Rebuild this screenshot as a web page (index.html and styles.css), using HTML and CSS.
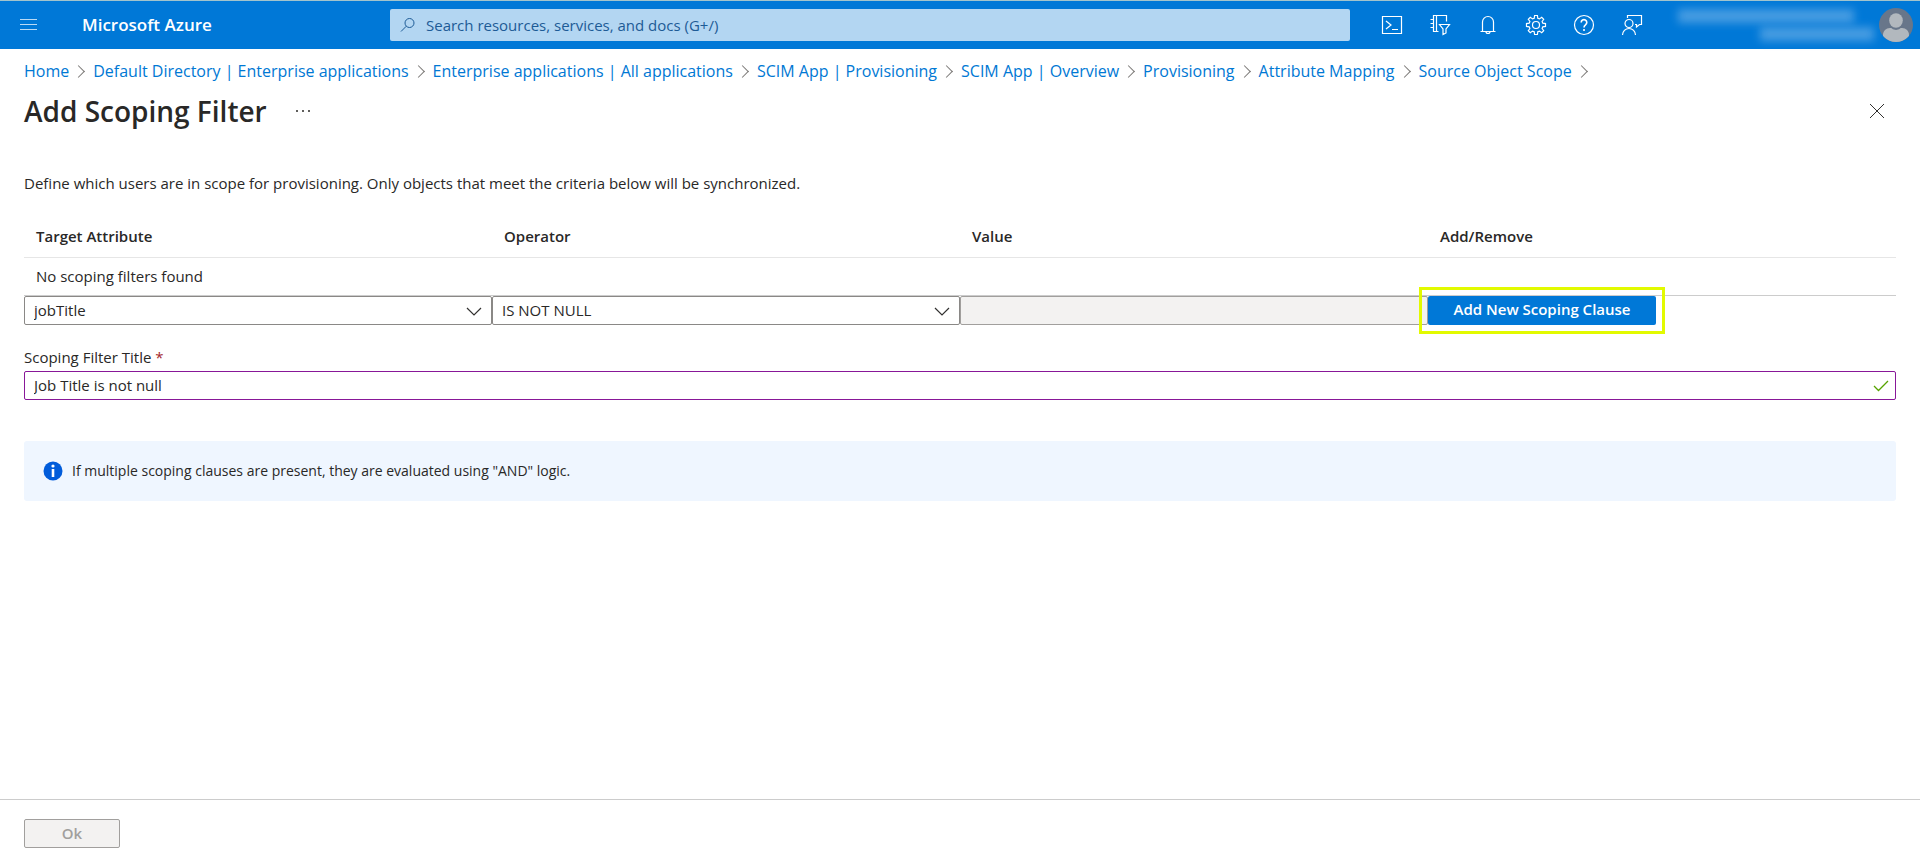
FILE: index.html
```html
<!DOCTYPE html>
<html lang="en">
<head>
<meta charset="utf-8">
<title>Add Scoping Filter - Microsoft Azure</title>
<link rel="stylesheet" href="styles.css">
</head>
<body>
<header class="topbar">
  <div class="brand">
    <button class="icon-btn menu" aria-label="Menu"><svg width="18" height="14" viewBox="0 0 18 14"><path d="M0 1.500h17M0 6.500h17M0 11.500h17" stroke="#b9daf5" fill="none"/></svg></button>
    <a class="brand-name" href="#">Microsoft Azure</a>
  </div>
  <div class="search">
    <svg width="16" height="16" viewBox="0 0 16 16"><circle cx="9.500" cy="6" r="4.500" stroke="#1d5b96" fill="none"/><path d="M6.300 9.200 1 14.500" stroke="#1d5b96" fill="none"/></svg>
    <input class="search-input" type="text" aria-label="Search" placeholder="Search resources, services, and docs (G+/)">
  </div>
  <div class="tools">
    <button class="icon-btn" aria-label="Cloud Shell"><svg width="24" height="24" viewBox="0 0 24 24"><path d="M2.500 3.500h19v17h-19zM6 8l5 4-5 4M12 16.500h6"/></svg></button>
    <button class="icon-btn" aria-label="Directories and subscriptions"><svg width="24" height="24" viewBox="0 0 24 24"><path d="M10.500 18.500H5.500V2.500h13v6M8.500 2.500v16M2.500 6.500h3M2.500 10.500h3M2.500 14.500h3M11.500 11.500h10l-3.500 4.500v4l-3 1.500V16z"/></svg></button>
    <button class="icon-btn" aria-label="Notifications"><svg width="24" height="24" viewBox="0 0 24 24"><path d="M4.500 18.500h15M6.500 18.500V9a5.500 5.500 0 0 1 11 0v9.500M10 18.500a2 2 0 0 0 4 0"/></svg></button>
    <button class="icon-btn" aria-label="Settings"><svg width="24" height="24" viewBox="0 0 24 24"><circle cx="12" cy="12" r="3.500"/><path d="M10.600 2.500h2.800l.4 2.700 1.700.7 2.200-1.600 2 2-1.600 2.200.7 1.700 2.700.4v2.800l-2.700.4-.7 1.700 1.600 2.200-2 2-2.200-1.600-1.700.7-.4 2.700h-2.800l-.4-2.700-1.700-.7-2.200 1.600-2-2 1.600-2.200-.7-1.700-2.700-.4v-2.800l2.700-.4.7-1.700-1.600-2.200 2-2 2.200 1.600 1.700-.7z"/></svg></button>
    <button class="icon-btn" aria-label="Help"><svg width="24" height="24" viewBox="0 0 24 24"><circle cx="12" cy="12" r="9.500"/><path d="M9.200 9.500a2.800 2.800 0 1 1 4.300 2.300c-1 .7-1.500 1.200-1.500 2.700M12 16v2" stroke-width="1.600"/></svg></button>
    <button class="icon-btn" aria-label="Feedback"><svg width="24" height="24" viewBox="0 0 24 24"><circle cx="9" cy="10.500" r="4"/><path d="M2.500 22a6.500 6.500 0 0 1 13 0M7.500 5V2.500h14v9h-2l-3 2.500v-2.500H15"/></svg></button>
  </div>
  <div class="account">
    <div class="account-id"><span class="smudge"></span><span class="smudge smudge-short"></span></div>
    <svg class="avatar" width="34" height="34" viewBox="0 0 34 34"><defs><clipPath id="face"><circle cx="17" cy="17" r="17"/></clipPath></defs><g clip-path="url(#face)"><path fill="#68768a" d="M0 0h34v34H0z"/><path d="M4 34V27c0-4 3-7 7-7h12c4 0 7 3 7 7v7z" fill="#b2b8be"/><ellipse cx="17" cy="13" rx="8" ry="9" fill="#68768a"/><ellipse cx="17" cy="12.500" rx="6.800" ry="7.300" fill="#b2b8be"/></g></svg>
  </div>
</header>
<main class="blade">
  <nav class="crumbs" aria-label="Breadcrumb">
    <a href="#">Home</a><a href="#">Default Directory | Enterprise applications</a><a href="#">Enterprise applications | All applications</a><a href="#">SCIM App | Provisioning</a><a href="#">SCIM App | Overview</a><a href="#">Provisioning</a><a href="#">Attribute Mapping</a><a href="#">Source Object Scope</a>
  </nav>
  <div class="title-row">
    <h1 class="title">Add Scoping Filter</h1>
    <button class="icon-btn more" aria-label="More"><svg width="16" height="4" viewBox="0 0 16 4"><path d="M1 1h2v2H1zM7 1h2v2H7zM13 1h2v2h-2z" fill="#605e5c"/></svg></button>
    <button class="icon-btn close" aria-label="Close"><svg width="16" height="16" viewBox="0 0 16 16"><path d="m1 1 14 14M15 1 1 15" stroke="#323130" fill="none"/></svg></button>
  </div>
  <p class="intro">Define which users are in scope for provisioning. Only objects that meet the criteria below will be synchronized.</p>
  <table class="clauses">
    <thead><tr><th>Target Attribute</th><th>Operator</th><th>Value</th><th>Add/Remove</th></tr></thead>
    <tbody><tr><td colspan="4">No scoping filters found</td></tr></tbody>
  </table>
  <div class="editor">
    <div class="field-wrap">
      <select class="field select" aria-label="Target Attribute"><option>jobTitle</option></select>
      <svg class="chevron" width="16" height="10" viewBox="0 0 16 10"><path d="m1 1 7 7 7-7" stroke="#323130" stroke-width="1.200" fill="none"/></svg>
    </div>
    <div class="field-wrap">
      <select class="field select" aria-label="Operator"><option>IS NOT NULL</option></select>
      <svg class="chevron" width="16" height="10" viewBox="0 0 16 10"><path d="m1 1 7 7 7-7" stroke="#323130" stroke-width="1.200" fill="none"/></svg>
    </div>
    <input class="field" type="text" aria-label="Value" disabled>
    <div class="highlight"><button class="add">Add New Scoping Clause</button></div>
  </div>
  <label class="label" for="filter-title">Scoping Filter Title <span class="required">*</span></label>
  <div class="field-wrap">
    <input class="field valid" id="filter-title" type="text" value="Job Title is not null">
    <svg class="tick" width="16" height="12" viewBox="0 0 16 12"><path d="m1 6 4.500 4.500L15 1" stroke="#57a300" stroke-width="1.300" fill="none"/></svg>
  </div>
  <div class="notice">
    <svg width="20" height="20" viewBox="0 0 20 20"><circle cx="10" cy="10" r="9.500" fill="#015cda"/><circle cx="10" cy="5" r="1.600" fill="#fff"/><path d="M8.700 8h2.600v8H8.700z" fill="#fff"/></svg>
    <span>If multiple scoping clauses are present, they are evaluated using "AND" logic.</span>
  </div>
</main>
<footer class="footer"><button class="ok" disabled>Ok</button></footer>
</body>
</html>
```
FILE: styles.css
```css
* { box-sizing: border-box; }
body { margin: 0; min-height: 100vh; display: flex; flex-direction: column; background: #fff; color: #292827; font: 15px/20px "Open Sans", "Noto Sans", sans-serif; }
button, input, select { font: inherit; color: inherit; }
a { color: #0078d4; text-decoration: none; }
.icon-btn { display: flex; align-items: center; justify-content: center; padding: 0; border: 0; background: none; }

.topbar { display: grid; grid-template-columns: 390px 50% 1fr auto; align-items: center; height: 49px; background: #0078d7; border-top: 1px solid #a3c4cc; }
.brand { display: flex; align-items: center; gap: 44px; padding-left: 20px; }
.brand-name { color: #fff; font-size: 17px; font-weight: 600; }
.search { display: flex; align-items: center; gap: 10px; height: 32px; padding: 0 10px; background: #b3d6f2; border-radius: 2px; }
.search-input { flex: 1; padding: 0; border: 0; background: none; outline: 0; }
.search-input::placeholder { color: #1d5b96; opacity: 1; }
.tools { display: flex; padding-left: 18px; }
.tools .icon-btn { width: 48px; height: 48px; }
.tools svg { fill: none; stroke: #fff; stroke-width: 1.2; }
.account { display: flex; align-items: center; gap: 5px; padding-right: 7px; }
.account-id { display: flex; flex-direction: column; align-items: flex-end; gap: 4px; width: 196px; }
.smudge { width: 176px; height: 14px; margin-right: 20px; background: #4ea0e3; filter: blur(4px); opacity: .9; }
.smudge-short { width: 114px; margin-right: 0; }

.blade { flex: 1; padding: 12px 24px 0; }
.crumbs { display: flex; font-size: 16px; line-height: 20px; }
.crumbs a { display: flex; align-items: center; }
.crumbs a::after { content: ""; width: 8px; height: 8px; margin: 0 10px 0 5px; border: solid #797775; border-width: 1px 1px 0 0; transform: rotate(45deg); }
.title-row { display: flex; align-items: center; height: 36px; margin-top: 12px; }
.title { margin: 0; font-size: 28px; line-height: 36px; font-weight: 600; }
.more { margin-left: 28px; }
.close { margin-left: auto; margin-right: 11px; }
.intro { margin: 44px 0 0; }
.clauses { width: 100%; margin-top: 22px; border-collapse: collapse; table-layout: fixed; }
.clauses th { height: 42px; padding: 0 12px; text-align: left; font-weight: 600; border-bottom: 1px solid #e6e6e6; }
.clauses td { height: 38px; padding: 0 12px; border-bottom: 1px solid #ccc; }
.editor { display: grid; grid-template-columns: repeat(4, 1fr); }
.field-wrap { position: relative; }
.field { display: block; width: 100%; height: 29px; padding: 0 9px; border: 1px solid #8a8886; border-radius: 2px; background: #fff; }
.field:disabled { background: #f3f2f1; border-color: #a19f9d; }
.select { appearance: none; }
.chevron { position: absolute; right: 10px; top: 11px; pointer-events: none; }
.highlight { justify-self: start; width: 228px; outline: 3px solid #e2fa00; outline-offset: 6px; }
.add { display: block; width: 100%; height: 29px; padding: 0 0 2px; border: 0; border-radius: 2px; background: #0078d7; color: #fff; font-weight: 600; }
.label { display: block; margin: 22px 0 4px; }
.required { color: #a4262c; }
.valid { border-color: #881798; }
.tick { position: absolute; right: 7px; top: 9px; }
.notice { display: flex; align-items: center; gap: 9px; height: 60px; margin-top: 41px; padding-left: 19px; border-radius: 3px; background: #eff6ff; font-size: 14px; }
.footer { padding: 19px 24px 18px; border-top: 1px solid #ccc; }
.ok { display: block; width: 96px; height: 29px; padding: 0 0 2px; border: 1px solid #a19f9d; border-radius: 2px; background: #f3f2f1; color: #a19f9d; font-weight: 600; }
```
